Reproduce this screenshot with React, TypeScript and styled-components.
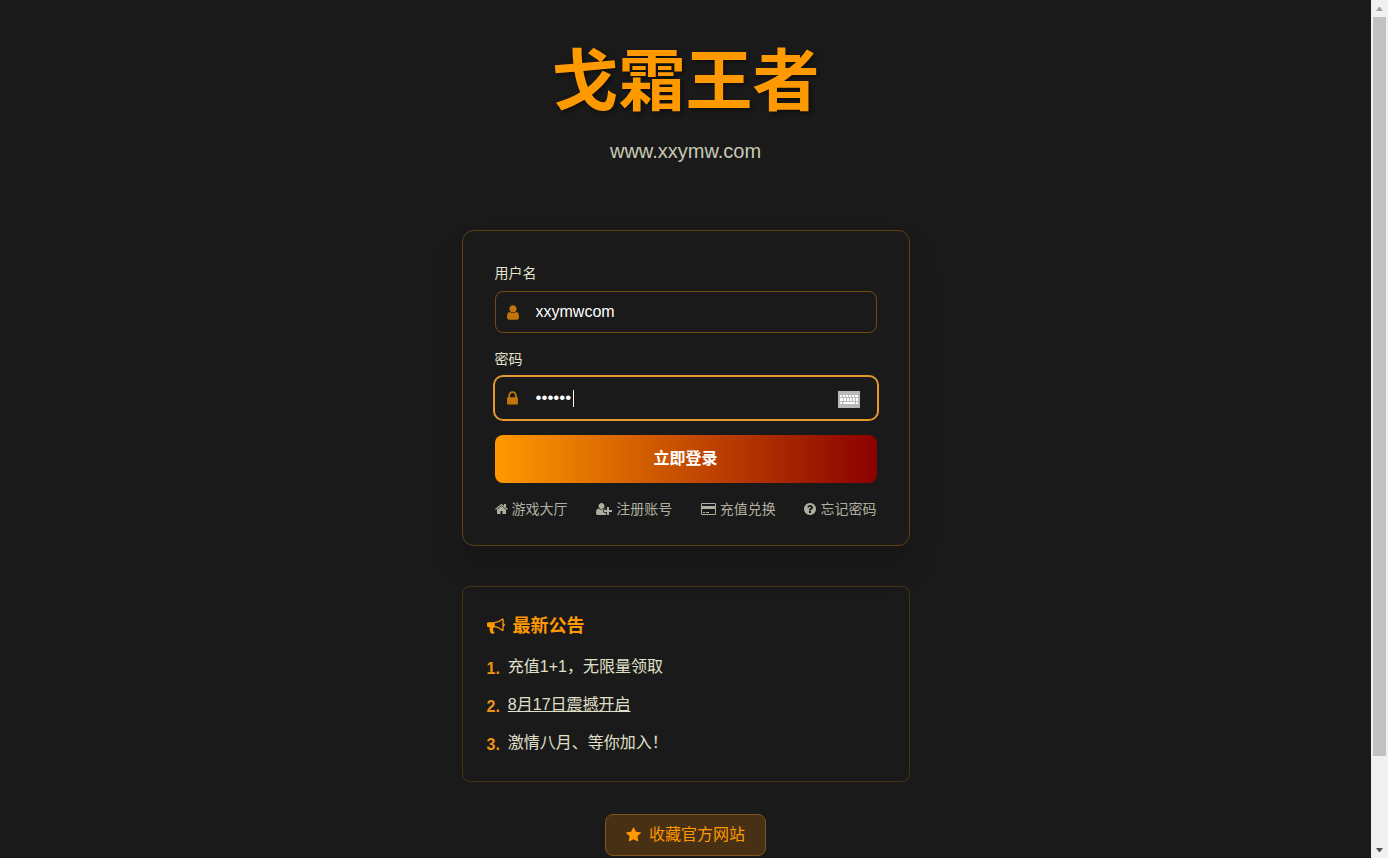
import React from "react";
import styled, { createGlobalStyle } from "styled-components";

const GlobalStyle = createGlobalStyle`
  *, *::before, *::after { box-sizing: border-box; }
  html, body { margin: 0; background: #1a1a1a; }
  body {
    overflow: hidden;
    color: #f5f5dc;
    font: 16px/24px "Liberation Sans", "Noto Sans CJK SC", sans-serif;
  }
`;

const Shell = styled.div`
  display: flex;
  align-items: stretch;
  height: 100vh;
`;

const Page = styled.main`
  flex: 1;
  min-width: 0;
  overflow-y: auto;
  scrollbar-width: none;
  display: flex;
  flex-direction: column;
  align-items: center;
  padding: 34px 16px 0;
`;

const Header = styled.header`
  flex: none;
  text-align: center;
  margin-bottom: 64px;
`;

const Title = styled.h1`
  margin: 0 0 6px;
  font-size: 67px;
  line-height: 96px;
  font-weight: 700;
  color: #ff9900;
  text-shadow: 2px 2px 4px rgba(0, 0, 0, 0.5);
`;

const Site = styled.p`
  margin: 0;
  font-size: 20px;
  line-height: 30px;
  color: #c9c9b5;
`;

const Panel = styled.section`
  flex: none;
  width: 100%;
  max-width: 448px;
`;

const LoginForm = styled.form`
  display: flex;
  flex-direction: column;
  gap: 16px;
  padding: 32px 32px 26px;
  border: 1px solid rgba(255, 153, 0, 0.3);
  border-radius: 12px;
  box-shadow: 0 20px 30px rgba(0, 0, 0, 0.15);
`;

const Field = styled.div`
  display: flex;
  flex-direction: column;
  gap: 8px;
`;

const Label = styled.label`
  font-size: 14px;
  line-height: 20px;
  color: #e3e3cd;
`;

const InputBox = styled.div<{ $active?: boolean }>`
  display: flex;
  align-items: center;
  height: 42px;
  padding: 0 16px 0 11px;
  border: 1px solid ${(p) => (p.$active ? "transparent" : "rgba(255, 153, 0, 0.4)")};
  border-radius: 8px;
  box-shadow: ${(p) => (p.$active ? "0 0 0 2px #e5982d" : "none")};
  color: #c27609;
`;

const IconSlot = styled.span`
  display: flex;
  justify-content: center;
  width: 12px;
  margin-right: 17px;
`;

const Input = styled.input`
  flex: 1;
  min-width: 0;
  padding: 0;
  border: 0;
  outline: 0;
  background: transparent;
  color: #fff;
  font: inherit;
`;

const PasswordInput = styled(Input)`
  flex: none;
  width: 37px;
  font-size: 17px;
`;

const Caret = styled.span`
  width: 1px;
  height: 17px;
  margin-right: auto;
  background: #fff;
`;

const KeyboardButton = styled.button`
  display: flex;
  padding: 2px 0 0;
  border: 0;
  background: none;
`;

const Submit = styled.button`
  height: 48px;
  border: 0;
  border-radius: 8px;
  background: linear-gradient(to right, #ff9900, #8b0000);
  color: #fff;
  font: inherit;
  font-weight: 700;
`;

const Links = styled.nav`
  display: flex;
  justify-content: space-between;
`;

const Link = styled.a`
  display: flex;
  align-items: center;
  gap: 4px;
  font-size: 14px;
  line-height: 20px;
  color: #afafa0;
  text-decoration: none;
`;

const Notice = styled.div`
  margin: 40px 0 32px;
  padding: 24px;
  border: 1px solid rgba(255, 153, 0, 0.2);
  border-radius: 8px;
`;

const NoticeTitle = styled.h2`
  display: flex;
  align-items: center;
  gap: 8px;
  margin: 0 0 14px;
  font-size: 18px;
  line-height: 30px;
  font-weight: 700;
  color: #ff9900;
`;

const NoticeList = styled.ul`
  display: flex;
  flex-direction: column;
  gap: 12px;
  margin: 0;
  padding: 0;
  list-style: none;
`;

const NoticeItem = styled.li`
  display: flex;
  gap: 8px;
  height: 26px;
  line-height: 24px;
  color: #e0e0ca;
`;

const Number = styled.b`
  line-height: 28px;
  color: #ec9412;
`;

const NoticeLink = styled.a`
  color: inherit;
`;

const Favorite = styled.button`
  flex: none;
  display: flex;
  align-items: center;
  gap: 8px;
  height: 42px;
  padding: 0 20px;
  border: 1px solid #7e5720;
  border-radius: 8px;
  background: #483014;
  color: #ff9900;
  font: inherit;
`;

const Scrollbar = styled.div`
  flex: none;
  display: flex;
  flex-direction: column;
  width: 17px;
  background: #f1f1f1;
`;

const Arrow = styled.svg`
  flex: none;
  width: 17px;
  height: 17px;
`;

const Thumb = styled.div`
  flex: 739;
  margin: 0 2px;
  background: #c1c1c1;
`;

const TrackRest = styled.div`
  flex: 85;
`;

type Glyph = { width: number; d: string; x?: number };

const glyphs: Record<string, Glyph> = {
  user: {
    width: 1280,
    x: 256,
    d: "M1536 1399q0 109-62.5 187t-150.5 78h-854q-88 0-150.5-78t-62.5-187q0-85 8.5-160.5t31.5-152 58.5-131 94-89 134.5-34.5q131 128 313 128t313-128q76 0 134.5 34.5t94 89 58.5 131 31.5 152 8.5 160.5zm-256-887q0 159-112.5 271.5t-271.5 112.5-271.5-112.5-112.5-271.5 112.5-271.5 271.5-112.5 271.5 112.5 112.5 271.5z",
  },
  lock: {
    width: 1152,
    x: 320,
    d: "M640 768h512v-192q0-106-75-181t-181-75-181 75-75 181v192zm832 96v576q0 40-28 68t-68 28h-960q-40 0-68-28t-28-68v-576q0-40 28-68t68-28h32v-192q0-184 132-316t316-132 316 132 132 316v192h32q40 0 68 28t28 68z",
  },
  home: {
    width: 1664,
    x: 64,
    d: "M1472 992v480q0 26-19 45t-45 19h-384v-384h-256v384h-384q-26 0-45-19t-19-45v-480q0-1 .5-3t.5-3l575-474 575 474q1 2 1 6zm223-69l-62 74q-8 9-21 11h-3q-13 0-21-7l-692-577-692 577q-12 8-24 7-13-2-21-11l-62-74q-8-10-7-23.5t11-21.5l719-599q32-26 76-26t76 26l244 204v-195q0-14 9-23t23-9h192q14 0 23 9t9 23v408l219 182q10 8 11 21.5t-7 23.5z",
  },
  userPlus: {
    width: 2048,
    d: "M704 896q-159 0-271.5-112.5t-112.5-271.5 112.5-271.5 271.5-112.5 271.5 112.5 112.5 271.5-112.5 271.5-271.5 112.5zm960 128h352q13 0 22.5 9.5t9.5 22.5v192q0 13-9.5 22.5t-22.5 9.5h-352v352q0 13-9.5 22.5t-22.5 9.5h-192q-13 0-22.5-9.5t-9.5-22.5v-352h-352q-13 0-22.5-9.5t-9.5-22.5v-192q0-13 9.5-22.5t22.5-9.5h352v-352q0-13 9.5-22.5t22.5-9.5h192q13 0 22.5 9.5t9.5 22.5v352zm-736 224q0 52 38 90t90 38h256v238q-68 50-171 50h-874q-121 0-194-69t-73-190q0-53 3.5-103.5t14-109 26.5-108.5 43-97.5 62-81 85.5-53.5 111.5-20q19 0 39 17 79 61 154.5 91.5t164.5 30.5 164.5-30.5 154.5-91.5q20-17 39-17 132 0 217 96h-223q-52 0-90 38t-38 90v192z",
  },
  card: {
    width: 1920,
    d: "M1760 128q66 0 113 47t47 113v1216q0 66-47 113t-113 47h-1600q-66 0-113-47t-47-113v-1216q0-66 47-113t113-47h1600zm-1600 128q-13 0-22.5 9.5t-9.5 22.5v224h1664v-224q0-13-9.5-22.5t-22.5-9.5h-1600zm1600 1280q13 0 22.5-9.5t9.5-22.5v-608h-1664v608q0 13 9.5 22.5t22.5 9.5h1600zm-1504-128v-128h256v128h-256zm384 0v-128h384v128h-384z",
  },
  question: {
    width: 1536,
    x: 128,
    d: "M1024 1376v-192q0-14-9-23t-23-9h-192q-14 0-23 9t-9 23v192q0 14 9 23t23 9h192q14 0 23-9t9-23zm256-672q0-88-55.5-163t-138.5-116-170-41q-243 0-371 213-15 24 8 42l132 100q7 6 19 6 16 0 25-12 53-68 86-92 34-24 86-24 48 0 85.5 26t37.5 59q0 38-20 61t-68 45q-63 28-115.5 86.5t-52.5 125.5v36q0 14 9 23t23 9h192q14 0 23-9t9-23q0-19 21.5-49.5t54.5-49.5q32-18 49-28.5t46-35 44.5-48 28-60.5 12.5-81zm384 192q0 209-103 385.5t-279.5 279.5-385.5 103-385.5-103-279.5-279.5-103-385.5 103-385.5 279.5-279.5 385.5-103 385.5 103 279.5 279.5 103 385.5z",
  },
  bullhorn: {
    width: 1792,
    d: "M1664 640q53 0 90.5 37.5t37.5 90.5-37.5 90.5-90.5 37.5v384q0 52-38 90t-90 38q-417-347-812-380-58 19-91 66t-31 100.5 40 92.5q-20 33-23 65.5t6 58 33.5 55 48 50 61.5 50.5q-29 58-111.5 83t-168.500 11.5-132-55.5q-7-23-29.5-87.5t-32-94.5-23-89-15-101 3.500-98.500 22-110.500h-122q-66 0-113-47t-47-113v-192q0-66 47-113t113-47h480q435 0 896-384 52 0 90 38t38 90v384zm-128 604v-954q-394 302-768 343v270q377 42 768 341z",
  },
  star: {
    width: 1664,
    x: 64,
    d: "M1728 647q0 22-26 48l-363 354 86 500q1 7 1 20 0 21-10.5 35.5t-30.5 14.5q-19 0-40-12l-449-236-449 236q-22 12-40 12-21 0-31.5-14.5t-10.5-35.5q0-6 2-20l86-500-364-354q-25-27-25-48 0-37 56-46l502-73 225-455q19-41 49-41t49 41l225 455 502 73q56 9 56 46z",
  },
};

function Icon({ name, size }: { name: string; size: number }) {
  const { width, d, x = 0 } = glyphs[name];
  return (
    <svg
      width={Math.round((width / 1792) * size)}
      height={size}
      viewBox={`${x} 0 ${width} 1792`}
      fill="currentColor"
      aria-hidden="true"
    >
      <path d={d} />
    </svg>
  );
}

const links = [
  { icon: "home", text: "游戏大厅" },
  { icon: "userPlus", text: "注册账号" },
  { icon: "card", text: "充值兑换" },
  { icon: "question", text: "忘记密码" },
];

export default function App() {
  return (
    <>
      <GlobalStyle />
      <Shell>
        <Page>
          <Header>
            <Title>戈霜王者</Title>
            <Site>www.xxymw.com</Site>
          </Header>
          <Panel>
            <LoginForm onSubmit={(e) => e.preventDefault()}>
              <Field>
                <Label htmlFor="username">用户名</Label>
                <InputBox>
                  <IconSlot>
                    <Icon name="user" size={17} />
                  </IconSlot>
                  <Input id="username" defaultValue="xxymwcom" />
                </InputBox>
              </Field>
              <Field>
                <Label htmlFor="password">密码</Label>
                <InputBox $active>
                  <IconSlot>
                    <Icon name="lock" size={17} />
                  </IconSlot>
                  <PasswordInput id="password" type="password" defaultValue="xxymwc" />
                  <Caret />
                  <KeyboardButton type="button" aria-label="软键盘">
                    <svg width="22" height="17" viewBox="0 0 22 17" aria-hidden="true">
                      <rect width="22" height="17" fill="#b9b9b9" />
                      <path
                        d="M2 4h2v2H2zM5 4h2v2H5zM8 4h2v2H8zM11 4h2v2h-2zM14 4h2v2h-2zM17 4h3v2h-3zM2 7h3v3H2zM6 7h2v3H6zM9 7h2v3H9zM12 7h2v3h-2zM15 7h2v3h-2zM18 7h2v3h-2zM2 11h2v2H2zM5 11h12v2H5zM18 11h2v2h-2z"
                        fill="#fff"
                      />
                    </svg>
                  </KeyboardButton>
                </InputBox>
              </Field>
              <Submit type="submit">立即登录</Submit>
              <Links>
                {links.map((l) => (
                  <Link href="#" key={l.icon}>
                    <Icon name={l.icon} size={14} />
                    {l.text}
                  </Link>
                ))}
              </Links>
            </LoginForm>
            <Notice>
              <NoticeTitle>
                <Icon name="bullhorn" size={18} />
                最新公告
              </NoticeTitle>
              <NoticeList>
                <NoticeItem>
                  <Number>1.</Number>
                  <span>充值1+1，无限量领取</span>
                </NoticeItem>
                <NoticeItem>
                  <Number>2.</Number>
                  <NoticeLink href="#">8月17日震撼开启</NoticeLink>
                </NoticeItem>
                <NoticeItem>
                  <Number>3.</Number>
                  <span>激情八月、等你加入！</span>
                </NoticeItem>
              </NoticeList>
            </Notice>
          </Panel>
          <Favorite type="button">
            <Icon name="star" size={16} />
            收藏官方网站
          </Favorite>
        </Page>
        <Scrollbar aria-hidden="true">
          <Arrow viewBox="0 0 17 17">
            <path d="M5 11L8 7h1l3 4z" fill="#a3a3a3" />
          </Arrow>
          <Thumb />
          <TrackRest />
          <Arrow viewBox="0 0 17 17">
            <path d="M5 7l3 4h1l3-4z" fill="#505050" />
          </Arrow>
        </Scrollbar>
      </Shell>
    </>
  );
}
